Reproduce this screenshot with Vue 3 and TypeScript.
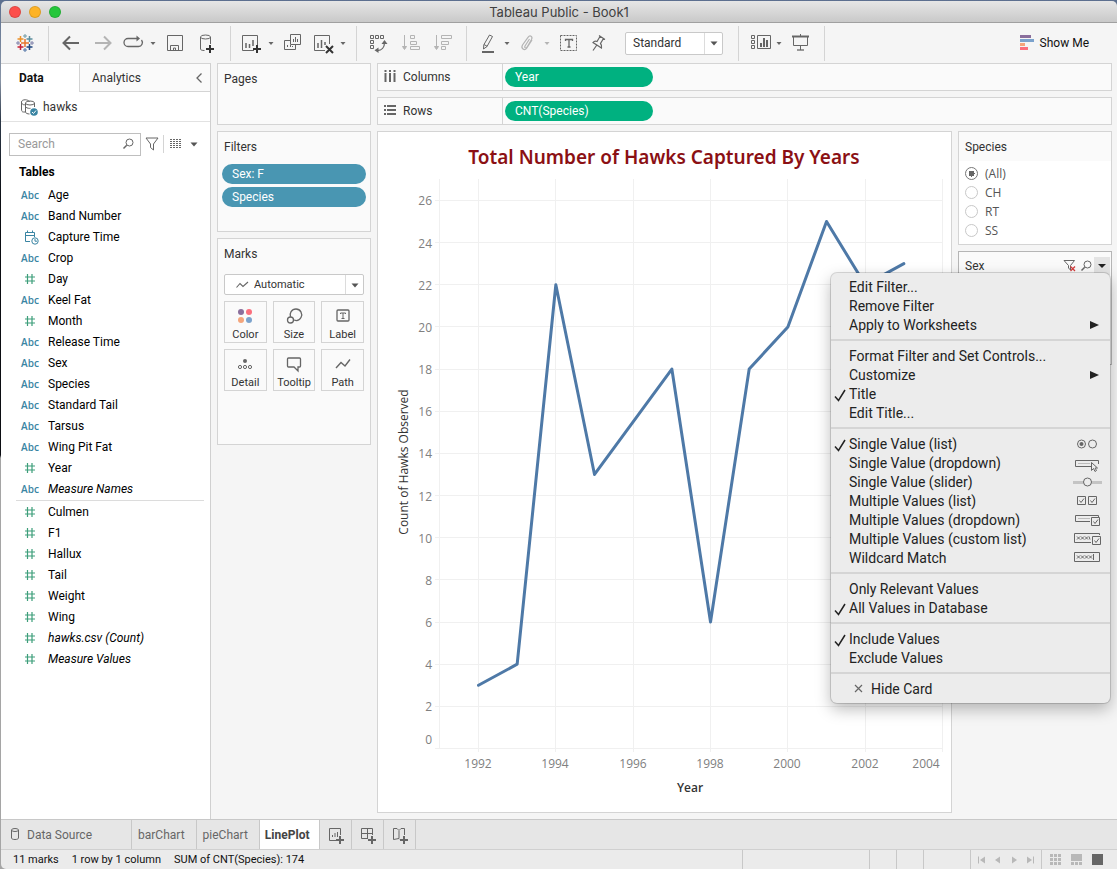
<script setup lang="ts">
import { ref } from 'vue'

interface Field { name: string; type: 'abc' | 'num' | 'date'; italic?: boolean }
interface MenuItem { label: string; checked?: boolean; submenu?: boolean; icon?: string; inset?: boolean }

const icons: Record<string, string> = {
  logo: `<g stroke-width="1.5">
    <path stroke="#e8762d" d="M12 8v8M8 12h8"/>
    <path stroke="#eb9129" d="M7.500 5v6M4.500 8h6"/><path stroke="#5c8f9e" d="M16.500 5v6M13.500 8h6"/>
    <path stroke="#c72035" d="M7.500 13v6M4.500 16h6"/><path stroke="#1f447e" d="M16.500 13v6M13.500 16h6"/></g>
    <g stroke-width="1"><path stroke="#6f9aa6" d="M12 3v4M10 5h4"/><path stroke="#7d7fa8" d="M5 10v4M3 12h4M19 10v4M17 12h4"/><path stroke="#4f73a5" d="M12 17v4M10 19h4"/></g>`,
  back: `<path stroke-width="2" d="M20 12H5M11 5.500L4.500 12l6.500 6.500"/>`,
  forward: `<path stroke="#b4b4b4" stroke-width="2" d="M4 12h15M13 5.500l6.500 6.500-6.500 6.500"/>`,
  replay: `<path stroke-width="1.300" d="M8 7.500H7a4 4 0 0 0 0 8h10.500a4 4 0 0 0 3-6.500M8 7.500h8"/><path fill="#666" stroke="none" d="M15.500 4.500l3.500 3-3.500 3z"/>`,
  caret: `<path fill="#666" stroke="none" d="M9.500 11h5L12 14z"/>`,
  caretDim: `<path fill="#b4b4b4" stroke="none" d="M9.500 11h5L12 14z"/>`,
  save: `<path d="M4.500 4.500h15v15h-15zM7.500 19v-4.500h8V19M10.500 19v-2h2v2"/>`,
  addData: `<ellipse cx="10.500" cy="6" rx="5" ry="2"/><path d="M5.500 6v12c0 1 1.500 1.500 4 1.500M15.500 6v7"/><path stroke="#333" stroke-width="2" d="M15 14v8M11 18h8"/>`,
  newSheet: `<path d="M15 19.500H3.500v-15h15V14"/><path stroke-width="1.500" d="M7 17v-5M10.500 17v-4M14 15V9"/><path stroke="#333" stroke-width="2" d="M18 14v8M14 18h8"/>`,
  duplicate: `<path d="M9.500 3.500h10v10h-10zM9 9.500H3.500v9h11V14M12.500 11V8M14.500 11V6M16.500 11V8M6.500 16v-2M9.500 16v-2M11.500 16v-1"/>`,
  clear: `<path d="M14 19.500H3.500v-15h15V13"/><path stroke-width="1.500" d="M7 17v-5M10.500 17V9M14 14v-3"/><path stroke="#333" stroke-width="2" d="M15 15l7 7M22 15l-7 7"/>`,
  swap: `<path d="M3.500 4.500h3v3h-3zM8.500 4.500h3v3h-3zM13.500 4.500h3v3h-3zM3.500 9.500h3v3h-3zM3.500 14.500h3v3h-3z"/><path stroke-width="1.300" d="M17.500 11.500c0 5-3 8-7 8"/><path fill="#666" stroke="none" d="M14.500 13l3-4 3 4zM11.500 16.500v5.500l-4-2.800z"/>`,
  sortAsc: `<g stroke="#b4b4b4"><path d="M5.500 4v13M11.500 4.500h4v3h-4zM11.500 10.500h6v3h-6zM11.500 15.500h9v3h-9z"/><path fill="#b4b4b4" d="M3.500 15.500h4l-2 3z"/></g>`,
  sortDesc: `<g stroke="#b4b4b4"><path d="M5.500 4v13M10.500 4.500h10v3h-10zM10.500 10.500h7v3h-7zM10.500 15.500h4v3h-4z"/><path fill="#b4b4b4" d="M3.500 15.500h4l-2 3z"/></g>`,
  pen: `<path stroke-width="2" d="M7 21h12"/><path d="M14.500 4l3 1.500-5.500 10-3.500 2.500.3-4.200zM9 13.500l3.200 1.800"/>`,
  clip: `<path stroke="#b4b4b4" stroke-width="1.200" d="M14.500 8l-4.500 7c-1 1.800 1 2.700 2 1.200l4.500-7.700c1.500-3-1.500-5-3.500-2.200L7.500 14c-2 3.500 2 6 4 3.500l5.500-8.500"/>`,
  text: `<path stroke-dasharray="2 1" d="M3.500 4.500h16v15h-16z"/><path stroke-width="1.300" d="M8.500 10V8.500h7V10M12 8.500V16M10.500 16h3"/>`,
  pin: `<path stroke-width="1.200" d="M12 4.500l6 4M13 5.500l-3 5c-1.500-.5-3-.3-4 1l8.500 5.500c.4-2 0-3.400-1-4.500l3-5M9.500 14.500L6 19.500"/>`,
  cards: `<path d="M4.500 4.500h3v3h-3zM4.500 9.500h3v3h-3zM4.500 14.500h3v3h-3zM10.500 4.500h13v13h-13z"/><path stroke-width="2" d="M14 16v-4M17 16V7M20 16v-7"/>`,
  present: `<path stroke-width="2" d="M3 5.500h17"/><path d="M11.500 3v2M4.500 6v8.500h14V6M11.500 14.500V19"/><path stroke-width="1.300" d="M8 19h7"/>`,
  showMe: `<g stroke="none"><path fill="#8a6e9c" d="M4 4h11v3H4z"/><path fill="#7ba2cc" d="M4 8h14v3H4z"/><path fill="#f4a57c" d="M4 12h5v3H4z"/><path fill="#fb6f7d" d="M4 16h8v3H4z"/></g>`,
  source: `<path d="M8 17H6.500C5 17 4.500 16 4.500 14V7c0-3 7-3 8 0M4.500 8c1 2 3 2 4 1.500"/><ellipse cx="13" cy="8" rx="4.500" ry="2"/><path d="M8.500 8v9c0 1.200 2 2 4 2M17.500 8v4M8.500 12c2 1.500 4 1.500 5 1.300"/><circle cx="17" cy="17" r="3.800" fill="#3a85a3" stroke="none"/><path stroke="#fff" d="M15 17l1.500 1.500L19 15.500"/>`,
  search: `<circle cx="13.500" cy="10.500" r="3.500"/><path stroke-width="1.500" d="M10.700 13.300L7.500 16.500"/>`,
  funnel: `<path d="M6 6h12l-4.500 6v6l-3-2.500V12z"/>`,
  list: `<path stroke-dasharray="2 1" stroke-width="1" d="M6 7.500h12M6 9.500h12M6 11.500h12M6 13.500h12M6 15.500h12"/>`,
  caretBig: `<path fill="#555" stroke="none" d="M8.500 10.500h7L12 14.500z"/>`,
  collapse: `<path stroke-width="1.300" d="M15.500 7.500L11 12l4.500 4.500"/>`,
  columns: `<path stroke-width="2" d="M7.500 8v9M12 8v9M16.500 8v9"/><path stroke-width="2" d="M7.500 5v2M12 5v2M16.500 5v2"/>`,
  rows: `<path stroke-width="2" d="M6 7h2M6 11h2M6 15h2M9 7h9M9 11h9M9 15h9"/>`,
  num: `<path stroke="#3d9e7a" stroke-width="1.200" d="M9.500 7v10M14 7v10M7 10h10M7 14h10"/>`,
  date: `<g stroke="#3a85a3"><path d="M12 16.500H7.500v-9h9V12M7.500 10.500h9M9.500 5.500v2M14.500 5.500v2"/><circle cx="17" cy="16" r="3.200"/><path d="M17 14v2.200h2"/></g>`,
  line: `<path stroke-width="1.100" d="M6.500 14.500l3.500-4 3 3 5-4.500"/>`,
  color: `<g stroke="none"><circle cx="8" cy="8" r="3" fill="#8a6e9c"/><circle cx="16" cy="8" r="3" fill="#fb6f7d"/><circle cx="8" cy="16" r="3" fill="#f4a57c"/><circle cx="16" cy="16" r="3" fill="#7ba2cc"/></g>`,
  size: `<path stroke-width="1.300" d="M8.500 13c-1.300-3.500 1-8 5.500-8s7 5 5 8.500c-1.500 2.700-4.500 3.500-7 2.500"/><circle cx="8.500" cy="16" r="3" stroke-width="1.300"/>`,
  label: `<rect x="6" y="6" width="12" height="11" rx="1" stroke-width="1.300"/><path d="M9.500 10V9h5v1M12 9v5.500M10.500 14.500h3"/>`,
  detail: `<circle cx="12" cy="9" r="2" fill="#666" stroke="none"/><circle cx="7" cy="15" r="1.600"/><circle cx="12" cy="15" r="1.600"/><circle cx="17" cy="15" r="1.600"/>`,
  tooltip: `<path stroke-width="1.300" d="M6.500 6h11q1 0 1 1v7q0 1-1 1H16v4l-4-4H6.500q-1 0-1-1V7q0-1 1-1z"/>`,
  path: `<path stroke-width="1.400" d="M5 16l5-5.500 4 3.500 5-6.500"/>`,
  funnelX: `<path d="M6 6.500h10.500l-4 5v4.500l-2-2v-2.500z"/><path stroke="#d43d3d" stroke-width="1.300" d="M12.500 12.500l4.500 4.500M17 12.500L12.500 17"/>`,
  caretDark: `<path fill="#222" stroke="none" d="M8 10h8l-4 4z"/>`,
  db: `<path d="M8.500 7v8c0 2 7 2 7 0V7"/><ellipse cx="12" cy="7" rx="3.500" ry="1.500"/>`,
  addSheet: `<path d="M13 17.500H5.500v-12h11V12M8.500 14v-2M11 14v-4M13.500 14V9"/><path stroke-width="2" d="M16 13v8M12 17h8"/>`,
  addDash: `<path d="M12 15.500H5.500v-10h11V12M11.500 5.500v10M5.500 10.500h11"/><path stroke-width="2" d="M16 13v8M12 17h8"/>`,
  addStory: `<path d="M12 16.500l-1-1-5.500 1v-11h3.500l2 2 2-2h3.500V12M11 8v7"/><path stroke-width="2" d="M16 13v8M12 17h8"/>`,
  first: `<path stroke="#b8b8b8" d="M8.500 8.500v7"/><path fill="#b8b8b8" stroke="none" d="M15 8.500v7L10 12z"/>`,
  prev: `<path fill="#b8b8b8" stroke="none" d="M14 8.500v7L9 12z"/>`,
  next: `<path fill="#b8b8b8" stroke="none" d="M10 8.500v7l5-3.500z"/>`,
  last: `<path stroke="#b8b8b8" d="M15.500 8.500v7"/><path fill="#b8b8b8" stroke="none" d="M9 8.500v7l5-3.500z"/>`,
  grid: `<path stroke="#b8b8b8" stroke-width="3" stroke-dasharray="3 1" d="M6 7.500h11M6 11.500h11M6 15.500h11"/>`,
  film: `<path fill="#b8b8b8" stroke="none" d="M6 6h11v7H6z"/><path stroke="#b8b8b8" stroke-width="3" stroke-dasharray="3 1" d="M6 15.500h11"/>`,
  single: `<path fill="#666" stroke="none" d="M6 6h11v11H6z"/>`,
}

// Wide glyphs (30 x 16) shown at the right of the filter menu
const menuIcons: Record<string, string> = {
  radios: `<circle cx="9.500" cy="7" r="4"/><circle cx="9.500" cy="7" r="2" fill="#666" stroke="none"/><circle cx="20.500" cy="7" r="4"/>`,
  dropdown: `<path d="M19 10.500H3.500v-6h23V8"/><path stroke="#bbb" d="M6 7.500h12"/><path fill="#ececec" d="M19.500 6.500v8l2-2 1.500 3 1.500-1-1.500-2.500h2.500z"/>`,
  slider: `<path stroke="#c4c4c4" stroke-width="3" d="M1 7.500h29"/><circle cx="15.500" cy="7" r="4" fill="#ececec"/>`,
  checks: `<path d="M5.500 2.500h8v8h-8zM16.500 2.500h8v8h-8zM7.500 6.500l1.500 2 3-4M18.500 6.500l1.500 2 3-4"/>`,
  dropCheck: `<path d="M18 8.500H3.500v-6h23V4"/><path stroke="#bbb" d="M6 5.500h12"/><path d="M19.500 4.500h8v8h-8zM21.500 8.500l1.500 2 3-4"/>`,
  customList: `<path d="M19 10.500H2.500v-9h25V3M5 4.500l3 3M8 4.500l-3 3M9 4.500l3 3M12 4.500l-3 3M13 4.500l3 3M16 4.500l-3 3M17 4.500l1 3"/><path d="M20.500 4.500h8v8h-8zM22.500 8.500l1.500 2 3-4"/>`,
  wildcard: `<path d="M2.500 1.500h25v9h-25zM5 4.500l3 3M8 4.500l-3 3M9 4.500l3 3M12 4.500l-3 3M13 4.500l3 3M16 4.500l-3 3M17 4.500l3 3M20 4.500l-3 3M21.500 3v6"/>`,
}

const toolGroups = [
  [['back', 'Undo', 'w32'], ['forward', 'Redo', 'w32'], ['replay', 'Replay', 'w28'], ['caret', 'Replay options', 'w12'], ['save', 'Save', 'w32'], ['addData', 'New data source', 'w32']],
  [['newSheet', 'New worksheet', 'w28'], ['caret', 'New worksheet options', 'w12'], ['duplicate', 'Duplicate', 'w32'], ['clear', 'Clear sheet', 'w28'], ['caret', 'Clear options', 'w12']],
  [['swap', 'Swap rows and columns', 'w32'], ['sortAsc', 'Sort ascending', 'w32'], ['sortDesc', 'Sort descending', 'w32']],
  [['pen', 'Highlight', 'w28'], ['caret', 'Highlight options', 'w12'], ['clip', 'Group members', 'w28'], ['caretDim', 'Group options', 'w12'], ['text', 'Show mark labels', 'w32'], ['pin', 'Fix axes', 'w28']],
  [['cards', 'Show cards', 'w28'], ['caret', 'Show card options', 'w12'], ['present', 'Presentation mode', 'w32']],
]

const dims: Field[] = [
  { name: 'Age', type: 'abc' }, { name: 'Band Number', type: 'abc' }, { name: 'Capture Time', type: 'date' },
  { name: 'Crop', type: 'abc' }, { name: 'Day', type: 'num' }, { name: 'Keel Fat', type: 'abc' },
  { name: 'Month', type: 'num' }, { name: 'Release Time', type: 'abc' }, { name: 'Sex', type: 'abc' },
  { name: 'Species', type: 'abc' }, { name: 'Standard Tail', type: 'abc' }, { name: 'Tarsus', type: 'abc' },
  { name: 'Wing Pit Fat', type: 'abc' }, { name: 'Year', type: 'num' }, { name: 'Measure Names', type: 'abc', italic: true },
]
const measures: Field[] = [
  { name: 'Culmen', type: 'num' }, { name: 'F1', type: 'num' }, { name: 'Hallux', type: 'num' }, { name: 'Tail', type: 'num' },
  { name: 'Weight', type: 'num' }, { name: 'Wing', type: 'num' }, { name: 'hawks.csv (Count)', type: 'num', italic: true },
  { name: 'Measure Values', type: 'num', italic: true },
]
const marks = [['color', 'Color'], ['size', 'Size'], ['label', 'Label'], ['detail', 'Detail'], ['tooltip', 'Tooltip'], ['path', 'Path']]

const menu: MenuItem[][] = [
  [{ label: 'Edit Filter...' }, { label: 'Remove Filter' }, { label: 'Apply to Worksheets', submenu: true }],
  [{ label: 'Format Filter and Set Controls...' }, { label: 'Customize', submenu: true }, { label: 'Title', checked: true }, { label: 'Edit Title...' }],
  [
    { label: 'Single Value (list)', checked: true, icon: 'radios' }, { label: 'Single Value (dropdown)', icon: 'dropdown' },
    { label: 'Single Value (slider)', icon: 'slider' }, { label: 'Multiple Values (list)', icon: 'checks' },
    { label: 'Multiple Values (dropdown)', icon: 'dropCheck' }, { label: 'Multiple Values (custom list)', icon: 'customList' },
    { label: 'Wildcard Match', icon: 'wildcard' },
  ],
  [{ label: 'Only Relevant Values' }, { label: 'All Values in Database', checked: true }],
  [{ label: 'Include Values', checked: true }, { label: 'Exclude Values' }],
  [{ label: 'Hide Card', inset: true }],
]

const species = ref('(All)')
const speciesOptions = ['(All)', 'CH', 'RT', 'SS']

const series: [number, number][] = [
  [1992, 3], [1993, 4], [1994, 22], [1995, 13], [1997, 18], [1998, 6],
  [1999, 18], [2000, 20], [2001, 25], [2002, 22], [2003, 23],
]
const px = (year: number) => 100.5 + (year - 1992) * 38.67
const py = (count: number) => 616.5 - count * 21.08
const snap = (v: number) => Math.floor(v) + 0.5
const points = series.map(([year, count]) => `${px(year)},${py(count)}`).join(' ')
const years = [1992, 1994, 1996, 1998, 2000, 2002, 2004]
const counts = Array.from({ length: 14 }, (_, i) => i * 2)
</script>

<template>
  <div class="window">
    <header class="titlebar">
      <div class="lights"><span class="lclose"></span><span class="lmin"></span><span class="lzoom"></span></div>
      <h1>Tableau Public - Book1</h1>
    </header>

    <div class="toolbar">
      <div class="group logo"><svg class="ico" viewBox="0 0 24 24" v-html="icons.logo"></svg></div>
      <div v-for="(g, i) in toolGroups" :key="i" class="group">
        <button v-for="[icon, name, w] in g" :key="name" :class="['tool', w]" :aria-label="name">
          <svg class="ico" viewBox="0 0 24 24" v-html="icons[icon]"></svg>
        </button>
        <label v-if="i === 3" class="pick fit">
          <select aria-label="Fit"><option>Standard</option></select>
          <span class="arrow"><svg class="ico" viewBox="0 0 24 24" v-html="icons.caretBig"></svg></span>
        </label>
      </div>
      <button class="showme"><svg class="ico" viewBox="0 0 24 24" v-html="icons.showMe"></svg>Show Me</button>
    </div>

    <main class="work">
      <aside class="data">
        <div class="tabs">
          <button class="on">Data</button>
          <button class="off">Analytics</button>
          <button class="fold" aria-label="Collapse"><svg class="ico" viewBox="0 0 24 24" v-html="icons.collapse"></svg></button>
        </div>
        <div class="source"><svg class="ico" viewBox="0 0 24 24" v-html="icons.source"></svg>hawks</div>
        <div class="find">
          <label class="box">
            <input type="text" placeholder="Search" aria-label="Search fields">
            <svg class="ico" viewBox="0 0 24 24" v-html="icons.search"></svg>
          </label>
          <button aria-label="Filter fields"><svg class="ico" viewBox="0 0 24 24" v-html="icons.funnel"></svg></button>
          <span class="bar"></span>
          <button class="wide" aria-label="View"><svg class="ico" viewBox="0 0 24 24" v-html="icons.list"></svg></button>
          <button class="narrow" aria-label="View options"><svg class="ico" viewBox="0 0 24 24" v-html="icons.caretBig"></svg></button>
        </div>
        <h2>Tables</h2>
        <ul class="fields">
          <li v-for="f in dims" :key="f.name">
            <span v-if="f.type === 'abc'" class="abc">Abc</span>
            <svg v-else class="ico" viewBox="0 0 24 24" v-html="icons[f.type]"></svg>
            <span :class="{ it: f.italic }">{{ f.name }}</span>
          </li>
        </ul>
        <ul class="fields measures">
          <li v-for="f in measures" :key="f.name">
            <svg class="ico" viewBox="0 0 24 24" v-html="icons[f.type]"></svg>
            <span :class="{ it: f.italic }">{{ f.name }}</span>
          </li>
        </ul>
      </aside>

      <div class="cards">
        <section class="card pages"><h3>Pages</h3></section>
        <section class="card filters">
          <h3>Filters</h3>
          <button class="pill blue">Sex: F</button>
          <button class="pill blue">Species</button>
        </section>
        <section class="card marks">
          <h3>Marks</h3>
          <label class="pick mark">
            <svg class="ico lead" viewBox="0 0 24 24" v-html="icons.line"></svg>
            <select aria-label="Mark type"><option>Automatic</option></select>
            <span class="arrow"><svg class="ico" viewBox="0 0 24 24" v-html="icons.caretBig"></svg></span>
          </label>
          <div class="tiles">
            <button v-for="[icon, name] in marks" :key="name"><svg class="ico" viewBox="0 0 24 24" v-html="icons[icon]"></svg>{{ name }}</button>
          </div>
        </section>
      </div>

      <div class="stage">
        <div class="shelf">
          <div class="name"><svg class="ico" viewBox="0 0 24 24" v-html="icons.columns"></svg>Columns</div>
          <button class="pill green">Year</button>
        </div>
        <div class="shelf">
          <div class="name"><svg class="ico" viewBox="0 0 24 24" v-html="icons.rows"></svg>Rows</div>
          <button class="pill green">CNT(Species)</button>
        </div>
        <div class="view">
          <section class="sheet">
            <svg class="chart" viewBox="0 0 573 680" role="img" aria-label="Total Number of Hawks Captured By Years">
              <text class="title" x="286" y="32">Total Number of Hawks Captured By Years</text>
              <g class="lines">
                <path v-for="c in counts" :key="c" :d="`M57 ${snap(py(c))}H565`" />
                <path :d="`M${snap(px(1991))} 47V616`" />
                <path v-for="y in years" :key="y" :d="`M${snap(px(y))} 47V620`" />
              </g>
              <text v-for="c in counts" :key="c" class="tick end" x="54" :y="c === 0 ? 612 : Math.round(py(c)) + 5">{{ c }}</text>
              <text v-for="y in years" :key="y" class="tick" :x="y === 2004 ? 548 : Math.floor(px(y))" y="636">{{ y }}</text>
              <text class="axis" x="312" y="660">Year</text>
              <text class="axis side" transform="translate(30 330) rotate(-90)">Count of Hawks Observed</text>
              <polyline class="trend" :points="points" />
            </svg>
          </section>
          <div class="filtercards">
            <section class="card species">
              <h3>Species</h3>
              <div class="radios">
                <label v-for="o in speciesOptions" :key="o"><input v-model="species" type="radio" name="species" :value="o">{{ o }}</label>
              </div>
            </section>
            <section class="card sex">
              <div class="head">
                <h3>Sex</h3>
                <button aria-label="Clear filter"><svg class="ico" viewBox="0 0 24 24" v-html="icons.funnelX"></svg></button>
                <button aria-label="Search values"><svg class="ico" viewBox="0 0 24 24" v-html="icons.search"></svg></button>
                <button class="open" aria-label="Filter menu"><svg class="ico" viewBox="0 0 24 24" v-html="icons.caretDark"></svg></button>
              </div>
              <div class="menu" role="menu">
                <div v-for="(g, i) in menu" :key="i" class="mgroup">
                  <button v-for="m in g" :key="m.label" role="menuitem">
                    <svg class="check" viewBox="0 0 18 19"><path v-if="m.checked" d="M4 11.500l3.500 4L14 5" /></svg>
                    <svg v-if="m.inset" class="close" viewBox="0 0 22 19"><path d="M6 5l7 7M13 5l-7 7" /></svg>
                    <span>{{ m.label }}</span>
                    <svg v-if="m.submenu" class="sub" viewBox="0 0 9 9"><path d="M0 0v8l9-4z" /></svg>
                    <svg v-if="m.icon" class="glyph" viewBox="0 0 30 16" v-html="menuIcons[m.icon]"></svg>
                  </button>
                </div>
              </div>
            </section>
          </div>
        </div>
      </div>
    </main>

    <nav class="sheets">
      <button class="ds"><svg class="ico" viewBox="0 0 24 24" v-html="icons.db"></svg>Data Source</button>
      <button>barChart</button>
      <button>pieChart</button>
      <button class="current">LinePlot</button>
      <button class="add" aria-label="New worksheet"><svg class="ico" viewBox="0 0 24 24" v-html="icons.addSheet"></svg></button>
      <button class="add" aria-label="New dashboard"><svg class="ico" viewBox="0 0 24 24" v-html="icons.addDash"></svg></button>
      <button class="add" aria-label="New story"><svg class="ico" viewBox="0 0 24 24" v-html="icons.addStory"></svg></button>
    </nav>

    <footer class="status">
      <span>11 marks</span><span>1 row by 1 column</span><span>SUM of CNT(Species): 174</span>
      <div class="cell c1"></div><div class="cell c2"></div><div class="cell c2"></div><div class="cell c3"></div>
      <div class="cell nav">
        <button v-for="n in ['first', 'prev', 'next', 'last']" :key="n" :aria-label="n"><svg class="ico" viewBox="0 0 24 24" v-html="icons[n]"></svg></button>
      </div>
      <div class="cell modes">
        <button v-for="n in ['grid', 'film', 'single']" :key="n" :aria-label="n"><svg class="ico" viewBox="0 0 24 24" v-html="icons[n]"></svg></button>
      </div>
    </footer>
  </div>
</template>

<style>
body { margin: 0; background: linear-gradient(#5c6f8f 0, #8b97a8 80px, #2c3848 120px, #0b0d12 200px, #0b0d12 455px, #a5a5a5 458px, #a5a5a5 100%); }
</style>

<style scoped>
* { box-sizing: border-box; }
.window { display: flex; flex-direction: column; height: 100vh; min-height: 720px; padding: 1px 0 0 1px; font: 12px/20px Roboto, "Liberation Sans", sans-serif; color: #333; }
button, input, select { font: inherit; color: inherit; background: none; border: 0; padding: 0; margin: 0; }
h1, h2, h3, ul { margin: 0; padding: 0; list-style: none; font-weight: 400; font-size: inherit; }
.ico { width: 24px; height: 24px; flex: none; fill: none; stroke: #666; display: block; }

.titlebar { display: flex; align-items: center; height: 22px; background: linear-gradient(#e6e6e6, #c9c9c9); border-bottom: 1px solid #a0a0a0; border-radius: 5px 5px 0 0; }
.lights { display: flex; gap: 8px; padding-left: 8px; width: 80px; }
.lights span { width: 12px; height: 12px; border-radius: 50%; border: 1px solid rgba(0, 0, 0, .12); }
.lclose { background: #fc4f4b; }
.lmin { background: #fdb326; }
.lzoom { background: #25c63b; }
.titlebar h1 { flex: 1; padding-right: 80px; text-align: center; font: 13px/20px Inter, sans-serif; color: #404040; }

.toolbar { display: flex; align-items: center; height: 40px; background: #f5f5f5; }
.group { display: flex; align-items: center; height: 35px; padding: 0 7px 0 6px; border-right: 1px solid #d4d4d4; }
.group.logo { width: 48px; padding: 0 12px; }
.tool { display: flex; justify-content: center; }
.w32 { width: 32px; }
.w28 { width: 28px; }
.w12 { width: 12px; }
.showme { display: flex; align-items: center; margin-left: auto; padding-right: 28px; color: #111; }
.pick { display: grid; grid-template: 100% / 1fr auto; align-items: center; background: #fff; border: 1px solid #c9c9c9; border-radius: 2px; }
.pick select { grid-column: 1 / 3; grid-row: 1; appearance: none; width: 100%; height: 100%; padding-left: 7px; outline: 0; }
.arrow { grid-column: 2; grid-row: 1; height: 100%; width: 18px; display: flex; align-items: center; justify-content: center; border-left: 1px solid #dcdcdc; pointer-events: none; }
.fit { width: 98px; height: 23px; margin: 0 8px 0 12px; }

.work { flex: 1; display: flex; background: #f5f5f5; min-height: 0; }
.data { width: 210px; background: #fff; border-right: 1px solid #d0d0d0; border-top: 1px solid #d4d4d4; }
.tabs { display: flex; height: 28px; }
.tabs button { line-height: 26px; text-align: left; }
.tabs .on { width: 78px; padding-left: 18px; font-weight: 700; color: #111; }
.tabs .off { flex: 1; padding-left: 12px; background: #fafafa; border-left: 1px solid #d4d4d4; border-bottom: 1px solid #d4d4d4; }
.tabs .fold { width: 24px; background: #fafafa; border-bottom: 1px solid #d4d4d4; }
.source { display: flex; align-items: center; gap: 2px; height: 30px; padding-left: 16px; border-bottom: 1px solid #e2e2e2; }
.find { display: flex; align-items: center; padding: 10px 0 0 8px; }
.box { display: flex; align-items: center; width: 132px; height: 23px; border: 1px solid #bfbfbf; }
.box input { flex: 1; min-width: 0; padding-left: 8px; outline: 0; }
.box input::placeholder { color: #999; opacity: 1; }
.find button { width: 22px; display: flex; justify-content: center; }
.find .bar { width: 1px; height: 18px; background: #d4d4d4; }
.find .wide { width: 24px; }
.find .narrow { width: 12px; }
.data h2 { font-weight: 700; color: #000; line-height: 32px; padding-left: 18px; }
.fields { margin: -4px 6px 0 0; padding-bottom: 1px; }
.fields li { display: flex; align-items: center; gap: 6px; height: 21px; padding-left: 17px; color: #000; }
.abc { width: 24px; text-align: center; font: 600 10px/18px "Open Sans", sans-serif; color: #3a85a3; }
.it { font-style: italic; }
.measures { border-top: 1px solid #dcdcdc; margin: 0 6px 0 15px; }
.measures li { padding-left: 2px; }

.cards { width: 154px; margin-left: 6px; display: flex; flex-direction: column; gap: 6px; }
.card { background: #fafafa; border: 1px solid #d4d4d4; }
.card h3 { line-height: 30px; padding-left: 6px; }
.pages { height: 62px; }
.filters { height: 101px; padding: 0 4px; display: flex; flex-direction: column; gap: 3px; }
.filters h3 { padding: 1px 0 0 2px; line-height: 28px; }
.pill { height: 20px; border-radius: 10px; color: #fff; text-align: left; padding-left: 10px; line-height: 20px; }
.blue { background: #4996b2; }
.green { background: #00b180; width: 148px; }
.marks { height: 207px; padding: 0 6px; }
.marks h3 { padding-left: 0; }
.mark { height: 21px; margin: 5px 0 6px; font-size: 11px; }
.mark select { padding-left: 29px; }
.mark .lead { grid-column: 1; grid-row: 1; margin-left: 5px; pointer-events: none; z-index: 1; }
.tiles { display: grid; grid-template-columns: repeat(3, 1fr); gap: 6px; }
.tiles button { height: 42px; display: flex; flex-direction: column; align-items: center; justify-content: center; border: 1px solid #d4d4d4; font-size: 11px; line-height: 14px; padding-top: 2px; }

.stage { flex: 1; display: flex; flex-direction: column; gap: 6px; margin: 0 5px 6px 6px; min-width: 0; }
.shelf { display: flex; align-items: center; gap: 2px; height: 28px; background: #fafafa; border: 1px solid #d4d4d4; }
.name { width: 125px; height: 100%; display: flex; align-items: center; gap: 1px; border-right: 1px solid #d4d4d4; }
.view { flex: 1; display: flex; gap: 6px; min-height: 0; }
.sheet { flex: 1; min-width: 0; background: #fff; border: 1px solid #d4d4d4; }
.chart { display: block; width: 100%; height: 100%; }
.lines path { stroke: #f0f0f0; fill: none; }
.title { font: 600 19px "Noto Sans", sans-serif; fill: #8b1014; text-anchor: middle; }
.tick { font: 12px "Open Sans", sans-serif; fill: #808080; text-anchor: middle; }
.tick.end { text-anchor: end; }
.axis { font: 600 12px "Open Sans", sans-serif; fill: #333; text-anchor: middle; }
.axis.side { font-weight: 500; }
.trend { fill: none; stroke: #4e79a7; stroke-width: 3; stroke-linejoin: round; stroke-linecap: round; }

.filtercards { width: 154px; display: flex; flex-direction: column; gap: 6px; }
.species { background: #fff; height: 114px; }
.species h3 { background: #fafafa; padding-top: 1px; line-height: 28px; }
.radios { padding: 3px 6px; display: flex; flex-direction: column; font-family: "Open Sans", sans-serif; color: #555; }
.radios label { display: flex; align-items: center; gap: 7px; height: 19px; }
.radios input { appearance: none; width: 13px; height: 13px; border: 1px solid #c8c8c8; border-radius: 50%; background: #fff; }
.radios input:checked { border-color: #777; background: radial-gradient(#666 0 3px, #fff 3px); }
.sex { position: relative; height: 114px; border-color: #b5b5b5; background: #fff; }
.head { display: flex; align-items: center; height: 28px; padding-right: 1px; background: #fafafa; }
.head h3 { flex: 1; }
.head button { width: 16px; height: 16px; display: flex; align-items: center; justify-content: center; }
.head .open { background: #e4e4e4; height: 18px; }

.menu { position: absolute; top: 21px; right: 1px; z-index: 5; width: 279px; padding: 5px 0 4px; background: #ececec; border-radius: 6px; box-shadow: 0 0 0 1px rgba(0, 0, 0, .14), 0 6px 16px rgba(0, 0, 0, .28); font: 14px/19px Roboto, sans-serif; color: #222; }
.mgroup + .mgroup { border-top: 2px solid #d5d5d5; margin-top: 4px; padding-top: 6px; }
.menu button { display: flex; align-items: center; width: 100%; height: 19px; text-align: left; padding-right: 8px; }
.menu span { flex: 1; white-space: nowrap; }
.check { width: 18px; height: 19px; fill: none; stroke: #222; stroke-width: 1.5; }
.close { width: 22px; height: 19px; fill: none; stroke: #666; stroke-width: 1.2; }
.sub { width: 9px; height: 9px; margin-right: 3px; fill: #222; }
.glyph { width: 30px; height: 16px; fill: none; stroke: #666; }

.sheets { display: flex; height: 31px; background: #e6e6e6; border-top: 1px solid #c8c8c8; border-bottom: 1px solid #d0d0d0; color: #666; }
.sheets button { border-right: 1px solid #c8c8c8; padding: 0 11px 0 6px; }
.sheets .ds { display: flex; align-items: center; width: 131px; padding: 0 2px; }
.sheets .current { background: #fff; font-weight: 700; color: #444; padding: 0 10px 0 5px; }
.sheets .add { width: 32px; padding: 0 4px; }

.status { display: flex; align-items: center; height: 19px; background: #ebebeb; font-size: 11px; color: #111; border-radius: 0 0 0 5px; padding-left: 12px; }
.status span { margin-right: 13px; white-space: nowrap; }
.cell { height: 100%; border-left: 1px solid #c8c8c8; display: flex; align-items: center; flex: none; }
.c1 { width: 127px; margin-left: auto; }
.c2 { width: 27px; }
.c3 { width: 47px; }
.nav { width: 71px; padding-left: 3px; }
.nav button { width: 16px; display: flex; justify-content: center; }
.modes { width: 76px; padding-left: 3px; }
.modes button { width: 21px; display: flex; justify-content: center; }
</style>
